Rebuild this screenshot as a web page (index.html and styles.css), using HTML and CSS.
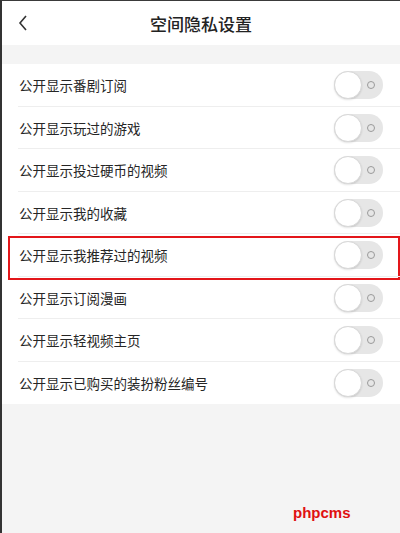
FILE: index.html
```html
<!DOCTYPE html>
<html lang="zh-CN">
    <head>
        <meta charset="UTF-8" />
        <meta name="viewport" content="width=device-width, initial-scale=1.0" />
        <title>空间隐私设置</title>
        <link rel="stylesheet" href="styles.css">
    </head>
    <body>
        <div class="screen">
            <header class="topbar">
                <span class="back">
                    <svg width="10" height="16" viewBox="0 0 10 16">
                        <path d="M8 1 L2 8 L8 15" fill="none" stroke="#333" stroke-width="1.6" />
                    </svg>
                </span>
                <h1>空间隐私设置</h1>
                <span></span>
            </header>

            <ul class="settings">
                <li class="row"><span>公开显示番剧订阅</span><span class="toggle"></span></li>
                <li class="row"><span>公开显示玩过的游戏</span><span class="toggle"></span></li>
                <li class="row"><span>公开显示投过硬币的视频</span><span class="toggle"></span></li>
                <li class="row"><span>公开显示我的收藏</span><span class="toggle"></span></li>
                <li class="row marked"><span>公开显示我推荐过的视频</span><span class="toggle"></span><i class="mark"></i></li>
                <li class="row"><span>公开显示订阅漫画</span><span class="toggle"></span></li>
                <li class="row"><span>公开显示轻视频主页</span><span class="toggle"></span></li>
                <li class="row"><span>公开显示已购买的装扮粉丝编号</span><span class="toggle"></span></li>
            </ul>

            <div class="watermark">phpcms</div>
        </div>
    </body>
</html>
```

FILE: styles.css
```css
body {
    margin: 0;
    font-family: "Noto Sans CJK SC", "Noto Sans", sans-serif;
    background-color: #f4f4f4;
    color: #222;
}

.screen {
    position: relative;
    width: 398px;
    height: 532px;
    border-left: 2px solid #333;
    border-top: 1px solid #3a3a3a;
    background: #f4f4f4;
    overflow: hidden;
}

.topbar {
    height: 44px;
    background: #fff;
    display: grid;
    grid-template-columns: 60px 1fr 60px;
    align-items: center;
}

.back {
    display: flex;
    align-items: center;
    padding-left: 16px;
}

.topbar h1 {
    margin: 0;
    text-align: center;
    font-size: 17px;
    font-weight: 500;
    color: #222;
}

.settings {
    list-style: none;
    margin: 19px 0 0;
    padding: 0;
    background: #fff;
}

.row {
    position: relative;
    height: 42.5px;
    display: flex;
    align-items: center;
    justify-content: space-between;
    padding: 0 17px 0 17px;
    font-size: 13.5px;
    color: #262626;
}

.row::after {
    content: "";
    position: absolute;
    left: 16px;
    right: 0;
    bottom: 0;
    height: 1px;
    background: #eeeeee;
}

.row:last-child::after {
    display: none;
}

.toggle {
    position: relative;
    width: 49px;
    height: 28px;
    border-radius: 14px;
    background: #e6e6e6;
    box-sizing: border-box;
}

.toggle::before {
    content: "";
    position: absolute;
    left: 0;
    top: 0;
    width: 28px;
    height: 28px;
    box-sizing: border-box;
    border-radius: 50%;
    background: #fff;
    border: 1px solid #d8d8d8;
    box-shadow: 0 1px 2px rgba(0, 0, 0, 0.12);
}

.toggle::after {
    content: "";
    position: absolute;
    right: 8px;
    top: 10px;
    width: 8px;
    height: 8px;
    box-sizing: border-box;
    border-radius: 50%;
    border: 1px solid #9a9a9a;
}

.mark {
    position: absolute;
    left: 6px;
    right: 0;
    top: 2px;
    bottom: -3px;
    border: 2px solid #e3161a;
}

.watermark {
    position: absolute;
    left: 291px;
    top: 503px;
    font-family: "Liberation Sans", sans-serif;
    font-weight: bold;
    font-size: 15px;
    color: #e01010;
}
```
